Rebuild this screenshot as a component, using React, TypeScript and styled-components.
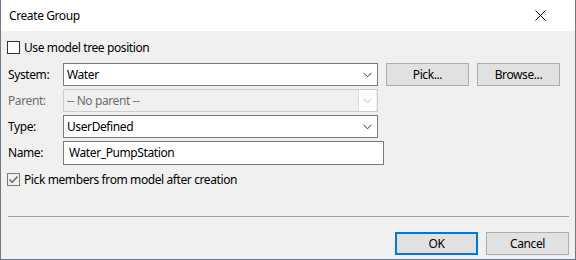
import React from "react";
import styled, { createGlobalStyle } from "styled-components";

const GlobalStyle = createGlobalStyle`
  html, body {
    margin: 0;
    padding: 0;
    background: #ffffff;
  }
  body {
    font-family: "Noto Sans", "Open Sans", sans-serif;
    font-size: 12px;
    letter-spacing: -0.4px;
    color: #000000;
  }
`;

function Chevron({ disabled }: { disabled?: boolean }) {
  return (
    <svg width="9" height="6" viewBox="0 0 9 6">
      <path
        d="M0.5 0.8 L4.5 4.8 L8.5 0.8"
        fill="none"
        stroke={disabled ? "#bfbfbf" : "#333333"}
        strokeWidth="1"
      />
    </svg>
  );
}

function Check({ checked, muted }: { checked?: boolean; muted?: boolean }) {
  return (
    <StyledCheckBox $muted={muted}>
      {checked && (
        <svg width="11" height="11" viewBox="0 0 11 11">
          <path
            d="M1.5 5.5 L4.2 8.2 L9.5 2.5"
            fill="none"
            stroke="#606060"
            strokeWidth="1.4"
          />
        </svg>
      )}
    </StyledCheckBox>
  );
}

export default function App() {
  return (
    <>
      <GlobalStyle />
      <StyledWindow>
        <StyledTitleBar>
          <span>Create Group</span>
          <StyledClose>
            <svg width="11" height="11" viewBox="0 0 11 11">
              <path d="M0.5 0.5 L10.5 10.5 M10.5 0.5 L0.5 10.5" stroke="#000" strokeWidth="1" />
            </svg>
          </StyledClose>
        </StyledTitleBar>

        <StyledBody>
          <StyledCheckRow $top={9}>
            <Check />
            <span>Use model tree position</span>
          </StyledCheckRow>

          <StyledForm>
            <StyledRow>
              <StyledLabel>System:</StyledLabel>
              <StyledCombo>
                <span>Water</span>
                <StyledArrow>
                  <Chevron />
                </StyledArrow>
              </StyledCombo>
              <StyledButton $width={83} $left={8}>Pick...</StyledButton>
              <StyledButton $width={83} $left={8}>Browse...</StyledButton>
            </StyledRow>

            <StyledRow>
              <StyledLabel $disabled>Parent:</StyledLabel>
              <StyledCombo $disabled>
                <span>-- No parent --</span>
                <StyledArrow $disabled>
                  <Chevron disabled />
                </StyledArrow>
              </StyledCombo>
            </StyledRow>

            <StyledRow>
              <StyledLabel>Type:</StyledLabel>
              <StyledCombo>
                <span>UserDefined</span>
                <StyledArrow>
                  <Chevron />
                </StyledArrow>
              </StyledCombo>
            </StyledRow>

            <StyledRow>
              <StyledLabel>Name:</StyledLabel>
              <StyledInput>Water_PumpStation</StyledInput>
            </StyledRow>
          </StyledForm>

          <StyledCheckRow $top={8}>
            <Check checked muted />
            <span>Pick members from model after creation</span>
          </StyledCheckRow>

          <StyledSeparator />

          <StyledFooter>
            <StyledButton $width={83} $primary>OK</StyledButton>
            <StyledButton $width={83} $left={8}>Cancel</StyledButton>
          </StyledFooter>
        </StyledBody>
      </StyledWindow>
    </>
  );
}

const StyledWindow = styled.div`
  width: 576px;
  height: 260px;
  box-sizing: border-box;
  border: 1px solid #6b7a8c;
  border-top: none;
  background: #f0f0f0;
  display: flex;
  flex-direction: column;
  overflow: hidden;
`;

const StyledTitleBar = styled.div`
  height: 31px;
  flex: none;
  background: #ffffff;
  display: flex;
  align-items: center;
  justify-content: space-between;
  padding: 0 0 0 8px;

  span {
    font-size: 12px;
    color: #000000;
    margin-top: -1px;
  }
`;

const StyledClose = styled.div`
  width: 46px;
  height: 31px;
  display: flex;
  align-items: center;
  justify-content: center;
  margin-right: 12px;
`;

const StyledBody = styled.div`
  flex: 1;
  display: flex;
  flex-direction: column;
  padding: 0 6px 0 6px;
`;

const StyledCheckRow = styled.label<{ $top: number }>`
  display: flex;
  align-items: center;
  height: 15px;
  margin-top: ${(p) => p.$top}px;
  gap: 4px;

  span {
    line-height: 15px;
  }
`;

const StyledCheckBox = styled.div<{ $muted?: boolean }>`
  width: 13px;
  height: 13px;
  box-sizing: border-box;
  border: 1px solid ${(p) => (p.$muted ? "#7a7a7a" : "#333333")};
  background: ${(p) => (p.$muted ? "#f0f0f0" : "#ffffff")};
  display: flex;
  align-items: center;
  justify-content: center;
  flex: none;
`;

const StyledForm = styled.div`
  display: flex;
  flex-direction: column;
  gap: 3px;
  margin-top: 8px;
`;

const StyledRow = styled.div`
  display: flex;
  align-items: center;
  height: 23px;
`;

const StyledLabel = styled.div<{ $disabled?: boolean }>`
  width: 56px;
  flex: none;
  padding-left: 1px;
  box-sizing: border-box;
  color: ${(p) => (p.$disabled ? "#6d6d6d" : "#000000")};
`;

const StyledCombo = styled.div<{ $disabled?: boolean }>`
  width: 315px;
  height: 23px;
  box-sizing: border-box;
  border: 1px solid ${(p) => (p.$disabled ? "#cccccc" : "#7a7a7a")};
  background: ${(p) => (p.$disabled ? "#f0f0f0" : "#ffffff")};
  color: ${(p) => (p.$disabled ? "#6d6d6d" : "#000000")};
  display: flex;
  align-items: center;
  justify-content: space-between;
  padding-left: 3px;
`;

const StyledArrow = styled.div<{ $disabled?: boolean }>`
  width: 17px;
  height: 100%;
  display: flex;
  align-items: center;
  justify-content: center;
  margin-right: 1px;
  border-left: 1px solid ${(p) => (p.$disabled ? "#dadada" : "transparent")};
  background: ${(p) => (p.$disabled ? "#ffffff" : "transparent")};
`;

const StyledInput = styled.div`
  width: 321px;
  height: 24px;
  box-sizing: border-box;
  border: 1px solid #7a7a7a;
  background: #ffffff;
  display: flex;
  align-items: center;
  padding-left: 5px;
`;

const StyledButton = styled.div<{ $width: number; $left?: number; $primary?: boolean }>`
  width: ${(p) => p.$width}px;
  height: 23px;
  box-sizing: border-box;
  margin-left: ${(p) => p.$left ?? 0}px;
  border: ${(p) => (p.$primary ? "2px solid #0078d7" : "1px solid #adadad")};
  background: #e1e1e1;
  display: flex;
  align-items: center;
  justify-content: center;
  flex: none;
`;

const StyledSeparator = styled.div`
  height: 1px;
  background: #a0a0a0;
  margin: 29px 0 0 1px;
  width: 561px;
`;

const StyledFooter = styled.div`
  display: flex;
  justify-content: flex-end;
  margin-top: 15px;
  padding-right: 0px;
`;
